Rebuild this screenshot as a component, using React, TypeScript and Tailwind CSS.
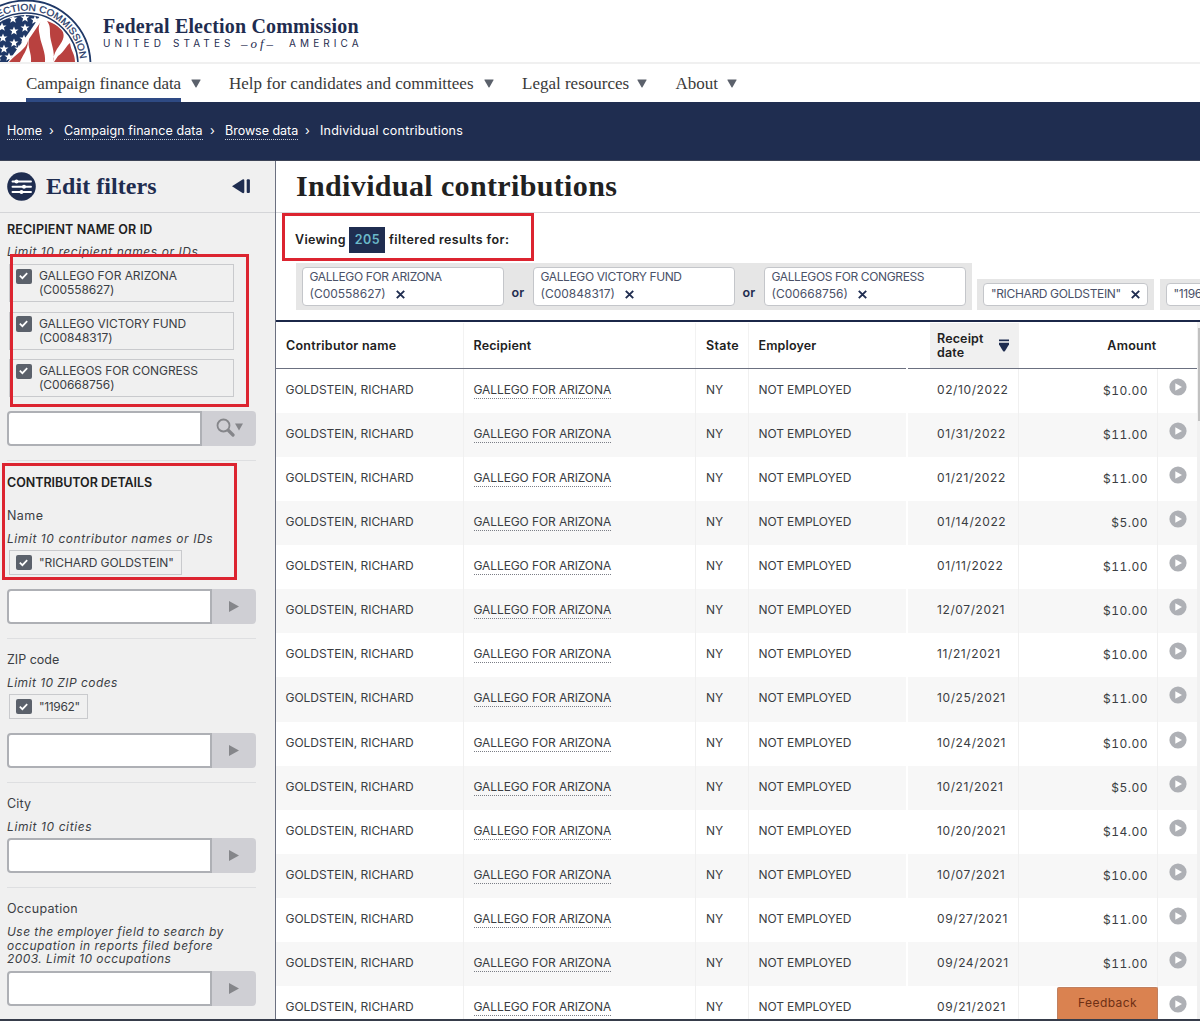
import React from 'react';
import { clsx } from 'clsx';

interface Contribution {
  date: string;
  amount: string;
}

const contributions: Contribution[] = [
  { date: '02/10/2022', amount: '$10.00' },
  { date: '01/31/2022', amount: '$11.00' },
  { date: '01/21/2022', amount: '$11.00' },
  { date: '01/14/2022', amount: '$5.00' },
  { date: '01/11/2022', amount: '$11.00' },
  { date: '12/07/2021', amount: '$10.00' },
  { date: '11/21/2021', amount: '$10.00' },
  { date: '10/25/2021', amount: '$11.00' },
  { date: '10/24/2021', amount: '$10.00' },
  { date: '10/21/2021', amount: '$5.00' },
  { date: '10/20/2021', amount: '$14.00' },
  { date: '10/07/2021', amount: '$10.00' },
  { date: '09/27/2021', amount: '$11.00' },
  { date: '09/24/2021', amount: '$11.00' },
  { date: '09/21/2021', amount: '' },
];

const committees = [
  { name: 'GALLEGO FOR ARIZONA', id: '(C00558627)' },
  { name: 'GALLEGO VICTORY FUND', id: '(C00848317)' },
  { name: 'GALLEGOS FOR CONGRESS', id: '(C00668756)' },
];

const stars = [
  [2, 27], [13, 19], [25, 18], [35, 20], [14, 31], [25, 28],
  [3, 38], [24, 39], [14, 43], [4, 49], [-2, 57], [9, 57], [19, 49],
];

function Seal() {
  return (
    <svg width="96" height="62" viewBox="0 0 96 62" className="block shrink-0">
      <defs>
        <clipPath id="seal-inner"><circle cx="26" cy="65" r="50" /></clipPath>
        <path id="seal-arc" d="M-28.5 65 A54.5 54.5 0 0 1 80.5 65" />
        <path id="star" d="M0-4.6 1.2-1.5 4.5-1.4 1.9.6 2.8 3.8 0 1.9-2.8 3.8-1.9.6-4.5-1.4-1.2-1.5Z" />
      </defs>
      <circle cx="26" cy="65" r="64.5" fill="#fff" stroke="#1f3867" strokeWidth="1.8" />
      <circle cx="26" cy="65" r="52" fill="#fff" stroke="#1f3867" strokeWidth="1.6" />
      <g clipPath="url(#seal-inner)">
        <path d="M-30 10H44L30 31 8 62H-30Z" fill="#1f3867" />
        {stars.map(([x, y]) => (
          <use key={`${x}-${y}`} href="#star" x={x} y={y} fill="#fff" />
        ))}
        <path d="M43 17 8 62H0V70H80V20Z" fill="#fff" />
        <path d="M42 20C37 26 39 31 40 37 41 44 46 53 45 62H31C32 53 27 47 29 39Z" fill="#b9413f" />
        <path d="M28 41C26 49 17 53 9 62H20C22 56 28 50 28 41Z" fill="#b9413f" />
        <path d="M47 21C53 23 59 26 62 30 66 37 62 42 57 49 54 54 53 58 53 62 56 52 50 42 50 34 50 28 50 25 47 21Z" fill="#b9413f" />
        <path d="M70 43C66 46 64 52 58 56L54 62H75C75 54 71 51 70 43Z" fill="#b9413f" />
      </g>
      <text fill="#1f3867" fontSize="9.6" fontFamily="Liberation Sans" stroke="#1f3867" strokeWidth=".25">
        <textPath href="#seal-arc" startOffset="44" textLength="121" lengthAdjust="spacingAndGlyphs">ELECTION COMMISSION</textPath>
      </text>
    </svg>
  );
}

function Caret({ className }: { className?: string }) {
  return (
    <svg width="10" height="9" viewBox="0 0 10 9" className={className} fill="currentColor">
      <path d="M.8.4H9.2Q9.9.4 9.6 1.1L5.5 8.2Q5 8.9 4.5 8.2L.4 1.1Q.1.4.8.4Z" />
    </svg>
  );
}

function NavItem({ label, className, active }: { label: string; className: string; active?: boolean }) {
  return (
    <li className="flex h-full items-start">
      <a
        className={clsx(
          'block h-[38px] whitespace-nowrap pt-[10px] font-["Liberation_Serif"] text-[17px] leading-[20px] text-[#3a3a3a]',
          active && 'border-b-4 border-[#2e4a84]',
          className,
        )}
      >
        {label}
      </a>
      <Caret className="mt-[15px] ml-[9.5px] text-[#5b616b]" />
    </li>
  );
}

function Crumb({ children, className }: { children: string; className: string }) {
  return (
    <>
      <a className={clsx('h-[17px] border-b border-dotted border-[#c8ccd6] whitespace-nowrap', className)}>{children}</a>
      <span className="h-[17px] w-[22px] pr-[3px] text-center">›</span>
    </>
  );
}

function Checkbox() {
  return (
    <span className="flex size-[15.5px] shrink-0 items-center justify-center rounded-[2px] bg-[#5b616b]">
      <svg width="9" height="8" viewBox="0 0 9 8" fill="none" stroke="#fff" strokeWidth="1.7">
        <path d="M.8 3.7 3.4 6.2 8.2 1.2" />
      </svg>
    </span>
  );
}

function FilterTag({ children, className }: { children: React.ReactNode; className?: string }) {
  return (
    <div className={clsx('ml-[2px] flex w-fit gap-[7.5px] border border-[#c9cacd] pl-[6px] text-[12px] leading-[14px] tracking-[-0.08px] whitespace-nowrap', className)}>
      <Checkbox />
      <div>{children}</div>
    </div>
  );
}

function SearchInput({ search, className }: { search?: boolean; className?: string }) {
  return (
    <div className={clsx('flex h-[35px]', className)}>
      <div className="flex-1 rounded-l-[4px] border-2 border-[#aeb0b5] bg-white" />
      <div className={clsx('flex items-center justify-center rounded-r-[4px] bg-[#cfcfd4] text-[#85868a]', search ? 'w-[54px]' : 'w-[44px]')}>
        {search ? (
          <>
            <svg width="19" height="19" viewBox="0 0 19 19" fill="none" stroke="currentColor" className="mt-[-2px]">
              <circle cx="7.5" cy="7.5" r="6" strokeWidth="1.8" />
              <path d="M12.5 12.5 17 17" strokeWidth="3.2" strokeLinecap="round" />
            </svg>
            <svg width="8" height="8" viewBox="0 0 8 8" fill="currentColor" className="mt-[-3px]"><path d="M0 .5H8L4 7.5Z" /></svg>
          </>
        ) : (
          <svg width="10" height="11" viewBox="0 0 10 11" fill="currentColor" className="mt-[-1px]"><path d="M0 0 10 5.5 0 11Z" /></svg>
        )}
      </div>
    </div>
  );
}

function Label({ children, className }: { children: string; className?: string }) {
  return <div className={clsx('h-5 text-[12.5px] leading-5 whitespace-nowrap', className)}>{children}</div>;
}

function Hint({ children, className }: { children: string; className?: string }) {
  return <div className={clsx('h-5 text-[12px] leading-5 whitespace-nowrap italic', className)}>{children}</div>;
}

function Divider() {
  return <hr className="mt-[14px] h-px border-0 bg-[#dedfe1]" />;
}

function RemoveIcon({ className }: { className?: string }) {
  return (
    <svg width="9" height="9" viewBox="0 0 9 9" stroke="#1f2d50" strokeWidth="1.9" className={className}>
      <path d="M.8.8 8.2 8.2M8.2.8.8 8.2" />
    </svg>
  );
}

function Sidebar() {
  return (
    <aside className="flex w-[276px] shrink-0 flex-col border-r border-[#6b7080] bg-[#f0f0f0] text-[#3b3e44]">
      <div className="flex h-[52px] items-center border-b border-[#d4d5d8] pl-[7px]">
        <svg width="29" height="29" viewBox="0 0 29 29" className="shrink-0">
          <circle cx="14.5" cy="14.5" r="14.3" fill="#1f2d50" />
          <g stroke="#fff" strokeWidth="1.9" strokeLinecap="round">
            <path d="M5.5 9.5H24M5.5 14.8H24M5.5 20H24" />
          </g>
          <g fill="#fff">
            <circle cx="9.5" cy="9.5" r="2" />
            <circle cx="17" cy="14.8" r="2" />
            <circle cx="14.5" cy="20" r="2" />
          </g>
        </svg>
        <h2 className="-mt-[2px] ml-[10px] w-[186px] font-['Liberation_Serif'] text-[24px] leading-8 font-bold tracking-[0.05px] text-[#1f2d50]">Edit filters</h2>
        <svg width="19" height="15" viewBox="0 0 19 15" fill="#1f2d50">
          <path d="M0 7.2 10.5.5Q12.3-.2 12.3 1.5V13Q12.3 14.6 10.5 14Z" />
          <rect x="14.7" y=".3" width="3.2" height="13.8" rx="1" />
        </svg>
      </div>
      <div className="flex w-[256px] flex-col pl-[7px]">
        <Label className="mt-[7px] font-semibold tracking-[0.14px] text-[#212121]">RECIPIENT NAME OR ID</Label>
        <Hint className="mt-[2px] tracking-[0.57px]">Limit 10 recipient names or IDs</Hint>
        <div className="mt-[2px] flex flex-col gap-[9.5px]">
          {committees.map((c) => (
            <FilterTag key={c.id} className="h-[38px] w-[225px]! pt-[3.5px]">
              <div className="pt-[0.5px]">{c.name}</div>
              <div>{c.id}</div>
            </FilterTag>
          ))}
        </div>
        <SearchInput search className="mt-[14px]" />
        <Divider />
        <Label className="mt-[12px] font-semibold tracking-[-0.04px] text-[#212121]">CONTRIBUTOR DETAILS</Label>
        <Label className="mt-[13px] tracking-[0.45px]">Name</Label>
        <Hint className="mt-[3px] tracking-[0.57px]">Limit 10 contributor names or IDs</Hint>
        <FilterTag className="mt-px h-[25px] items-center pr-[7px]">"RICHARD GOLDSTEIN"</FilterTag>
        <SearchInput className="mt-[14px]" />
        <Divider />
        <Label className="mt-[11px]">ZIP code</Label>
        <Hint className="mt-[3px] tracking-[0.45px]">Limit 10 ZIP codes</Hint>
        <FilterTag className="mt-px h-[25px] items-center pr-[7px] tracking-[-0.35px]!">"11962"</FilterTag>
        <SearchInput className="mt-[14px]" />
        <Divider />
        <Label className="mt-[11px] tracking-[0.2px]">City</Label>
        <Hint className="mt-[3px] tracking-[0.6px]">Limit 10 cities</Hint>
        <SearchInput className="mt-px" />
        <Divider />
        <Label className="mt-[11px] tracking-[0.3px]">Occupation</Label>
        <div className="mt-[6px] h-10 text-[12px] leading-[13.5px] tracking-[0.44px] whitespace-nowrap italic">
          Use the employer field to search by<br />
          <span className="tracking-[0.49px]">occupation in reports filed before</span><br />
          2003. Limit 10 occupations
        </div>
        <SearchInput className="mt-[6px]" />
      </div>
    </aside>
  );
}

function AppliedFilters() {
  return (
    <div className="mt-[10px] flex h-[47px] items-end gap-[5.5px] pl-[19.5px] text-[12px] leading-[17px] whitespace-nowrap text-[#4a5168]">
      <div className="flex h-[47px] w-[676px] shrink-0 justify-between bg-[#e6e6e6] px-[6px] py-[4px]">
        {committees.map((c, i) => (
          <React.Fragment key={c.id}>
            {i > 0 && <span className="w-[29px] pt-[17px] text-center text-[12.5px] font-semibold tracking-[0.3px] text-[#1f2d50]">or</span>}
            <div className="h-[39px] w-[202px] rounded-[4px] border border-[#c4c6ca] bg-white pl-[7px]">
              <div className="tracking-[-0.38px]">{c.name}</div>
              <div className="flex items-center gap-[10px]">{c.id}<RemoveIcon className="mt-[2px]" /></div>
            </div>
          </React.Fragment>
        ))}
      </div>
      <div className="h-[31px] w-[177px] shrink-0 bg-[#e6e6e6] px-[6px] py-[4px]">
        <div className="flex h-[23px] items-center gap-[10px] rounded-[4px] border border-[#c4c6ca] bg-white pl-[7px] tracking-[-0.35px]">
          <span className="-mt-[3px]">"RICHARD GOLDSTEIN"</span><RemoveIcon />
        </div>
      </div>
      <div className="h-[31px] w-[100px] shrink-0 bg-[#e6e6e6] px-[6px] py-[4px]">
        <div className="flex h-[23px] items-center gap-[10px] rounded-[4px] border border-[#c4c6ca] bg-white pl-[7px] tracking-[-0.4px]">
          <span className="-mt-[3px]">"11962"</span><RemoveIcon />
        </div>
      </div>
    </div>
  );
}

const GRID = 'grid grid-cols-[188px_232px_53px_157px_2px_111px_139px_39px]';

function ResultsTable() {
  return (
    <div className="mt-[10px] flex h-[701px] border-t-2 border-[#1b2748]">
      <div className="w-[921px] shrink-0">
        <div className={clsx(GRID, 'h-[47px] border-b border-[#6b7080] pt-[1px] text-[12.5px] font-semibold text-[#212121]')}>
          <div className="border-r border-[#f2f2f2] pl-[10px] leading-[45px] tracking-[0.27px]">Contributor name</div>
          <div className="border-r border-[#f2f2f2] pl-[9.5px] leading-[45px] tracking-[0.15px]">Recipient</div>
          <div className="border-r border-[#f2f2f2] pl-[10px] leading-[45px] tracking-[0.3px]">State</div>
          <div className="pl-[9.5px] leading-[45px] tracking-[0.15px]">Employer</div>
          <div className="-mb-px bg-white" />
          <div className="ml-[22px] flex items-center justify-between bg-[#f0f0f0] pr-[10px] pl-[7px]">
            <span className="leading-[13.5px] tracking-[0.15px]">Receipt<br />date</span>
            <svg width="10" height="13" viewBox="0 0 10 13" fill="#1f2d50">
              <rect width="10" height="1.7" y=".5" />
              <path d="M0 3.7H10V5.4L6 12Q5 13.2 4 12L0 5.4Z" />
            </svg>
          </div>
          <div className="pr-[1.5px] text-right leading-[45px] tracking-[0.25px]">Amount</div>
        </div>
        {contributions.map((row, i) => (
          <div key={row.date} className={clsx(GRID, 'h-[44.07px] text-[12px] leading-[42.4px] text-[#3a3d42]', i % 2 && 'bg-[#f7f7f7]')}>
            <div className="border-r border-[#f0f0f0] pl-[9.5px] tracking-[-0.03px]">GOLDSTEIN, RICHARD</div>
            <div className="border-r border-[#f0f0f0] pl-[9.5px] whitespace-nowrap">
              <a className="border-b border-dotted border-[#7b7e86] pb-[1px] tracking-[-0.1px]">GALLEGO FOR ARIZONA</a>
            </div>
            <div className="border-r border-[#f0f0f0] pl-[10px]">NY</div>
            <div className="pl-[9.5px] tracking-[-0.1px]">NOT EMPLOYED</div>
            <div className="bg-white" />
            <div className="border-r border-[#f0f0f0] pl-[29px] tracking-[0.6px]">{row.date}</div>
            <div className="border-r border-[#f0f0f0] pr-[9px] text-right leading-[43px] tabular-nums tracking-[0.5px]">{row.amount}</div>
            <div className="pt-[9px] pl-[11px]">
              <svg width="18" height="18" viewBox="0 0 18 18">
                <circle cx="9" cy="9" r="8.6" fill="#aeb0b5" />
                <path d="M6.3 5.2 13 9 6.3 12.8Z" fill="#fff" />
              </svg>
            </div>
          </div>
        ))}
      </div>
      <div className="flex-1 bg-[#f1f1f1] pt-[6px]">
        <div className="ml-[1px] h-[93px] bg-[#c1c1c1]" />
      </div>
    </div>
  );
}

export default function App() {
  return (
    <div className="relative flex h-[1021px] w-[1200px] flex-col overflow-hidden bg-white font-[Inter,sans-serif]">
      <header className="flex h-[64px] shrink-0 items-start border-b-2 border-[#f0f0f0]">
        <Seal />
        <div className="ml-[7px] pt-[15px]">
          <div className="font-['Liberation_Serif'] text-[20px] leading-[22px] font-bold tracking-[0.17px] text-[#1f2d50]">Federal Election Commission</div>
          <div className="flex items-center text-[10px] leading-[13px] tracking-[4.1px] whitespace-nowrap text-[#1f2d50]">
            <span className="w-[70px]">UNITED</span>
            <span className="w-[68px]">STATES</span>
            <span className="w-[48px] font-['Liberation_Serif'] text-[13px] tracking-[3px] italic">–of–</span>
            <span>AMERICA</span>
          </div>
        </div>
      </header>
      <nav className="h-[38px] shrink-0">
        <ul className="flex h-full pl-[26px]">
          <NavItem label="Campaign finance data" className="w-[155px] tracking-[-0.08px]" active />
          <NavItem label="Help for candidates and committees" className="ml-[28.5px] w-[245px]" />
          <NavItem label="Legal resources" className="ml-[28.5px] w-[105px]" />
          <NavItem label="About" className="ml-[29px] w-[42px]" />
        </ul>
      </nav>
      <div className="flex h-[59px] shrink-0 items-center border-b border-[#3c4356] bg-[#1f2d50] pt-[1px] pl-[7px] text-[12.5px] leading-[16px] text-white">
        <Crumb className="w-[35px]">Home</Crumb>
        <Crumb className="w-[139px] tracking-[0.09px]">Campaign finance data</Crumb>
        <Crumb className="w-[73px] tracking-[-0.02px]">Browse data</Crumb>
        <span className="h-[17px] tracking-[0.22px]">Individual contributions</span>
      </div>
      <div className="flex h-[858px] shrink-0 overflow-hidden">
        <Sidebar />
        <main className="flex w-[924px] flex-col overflow-hidden">
          <div className="h-[52px] shrink-0 border-b border-[#d8d9dc] pl-[20px]">
            <h1 className="font-['Liberation_Serif'] text-[30px] leading-[49px] font-bold tracking-[0.36px] text-[#212121]">Individual contributions</h1>
          </div>
          <div className="mt-[14px] flex h-[26px] shrink-0 items-center pl-[19px] text-[12.5px] font-semibold whitespace-nowrap text-[#212121]">
            <span className="w-[54px] tracking-[0.3px]">Viewing</span>
            <span className="w-[36px] bg-[#1f2d50] pl-px text-center leading-[26px] tracking-[0.5px] text-[#6bb9c9]">205</span>
            <span className="ml-[4px] tracking-[0.4px]">filtered results for:</span>
          </div>
          <AppliedFilters />
          <ResultsTable />
        </main>
      </div>
      <button className="absolute top-[987px] left-[1057px] h-[33px] w-[101px] rounded-t-[2px] border border-b-0 border-[#c08060] bg-[#da8250] pb-[3px] text-[12px] tracking-[0.4px] text-[#6e2f14]">Feedback</button>
      <div className="absolute inset-x-0 bottom-0 h-[2px] bg-[#363c4a]" />
      {/* highlight frames */}
      <div className="absolute top-[213px] left-[282px] h-[48px] w-[252px] border-3 border-[#dc2430]" />
      <div className="absolute top-[254px] left-[10px] h-[153px] w-[239px] border-3 border-[#dc2430]" />
      <div className="absolute top-[463px] left-[2px] h-[117px] w-[235px] border-3 border-[#dc2430]" />
    </div>
  );
}
